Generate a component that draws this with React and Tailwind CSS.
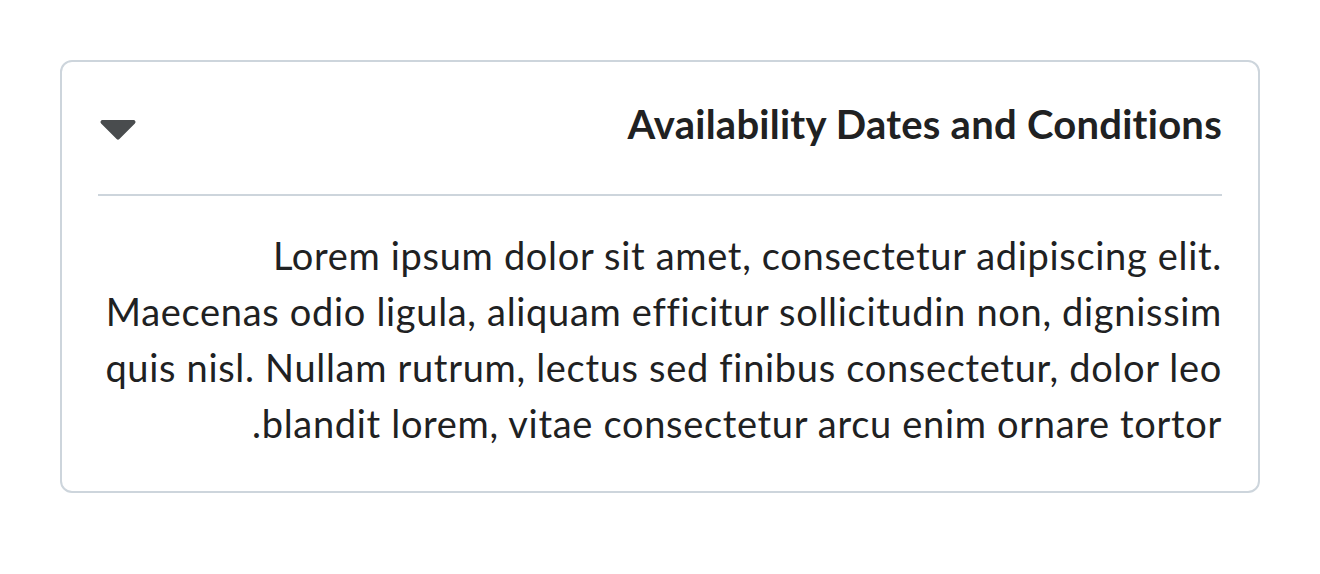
export default function App() {
  return (
    <div className="min-h-screen bg-white pt-[60px] px-[60px]" style={{ fontFamily: 'Lato, "Noto Sans", sans-serif' }}>
      <div dir="rtl" className="w-[1200px] rounded-[12px] border-2 border-[#cdd5dc] px-[36px] pb-[40px]">
        {/* Header */}
        <div className="flex items-start justify-between pt-[38px] pb-[46px] border-b-2 border-[#cdd5dc]">
          <h2 className="text-[40px] leading-[48px] font-bold tracking-[0.25px] text-[#202122]">
            Availability Dates and Conditions
          </h2>
          <svg width="36" height="20" viewBox="0 0 36 20" className="mt-[20px] ml-[2px]">
            <path
              d="M2.5 0H33.5A2 2 0 0 1 34.9 3.4L19.4 19.1A2 2 0 0 1 16.6 19.1L1.1 3.4A2 2 0 0 1 2.5 0Z"
              fill="#494c4e"
            />
          </svg>
        </div>

        {/* Body */}
        <p className="pt-[31px] text-[38px] leading-[56px] tracking-[0.68px] text-[#202122]">
          Lorem ipsum dolor sit amet, consectetur adipiscing elit. Maecenas odio ligula, aliquam efficitur sollicitudin non, dignissim quis nisl. Nullam rutrum, lectus sed finibus consectetur, dolor leo blandit lorem, vitae consectetur arcu enim ornare tortor.
        </p>
      </div>
    </div>
  )
}
